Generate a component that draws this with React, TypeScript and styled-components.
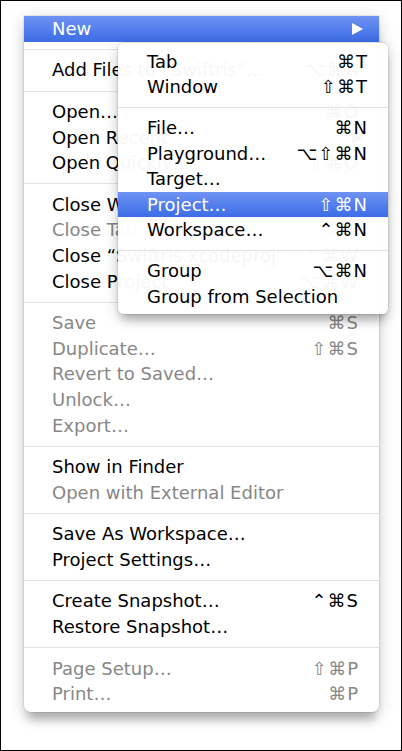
import styled, { createGlobalStyle } from "styled-components";

type Item =
  | { kind: "sep" }
  | {
      kind?: "item";
      label: string;
      keys?: string;
      disabled?: boolean;
      active?: boolean;
      submenu?: boolean;
    };

const MAIN: Item[] = [
  { label: "New", active: true, submenu: true },
  { kind: "sep" },
  { label: "Add Files to “Swiftris”…", keys: "⌥⌘A" },
  { kind: "sep" },
  { label: "Open…", keys: "⌘O" },
  { label: "Open Recent", submenu: true },
  { label: "Open Quickly…", keys: "⇧⌘O" },
  { kind: "sep" },
  { label: "Close Window", keys: "⌘W" },
  { label: "Close Tab", keys: "⌘W", disabled: true },
  { label: "Close “Swiftris.xcodeproj”", keys: "⌃⌘W" },
  { label: "Close Project", keys: "⌥⌘W" },
  { kind: "sep" },
  { label: "Save", keys: "⌘S", disabled: true },
  { label: "Duplicate…", keys: "⇧⌘S", disabled: true },
  { label: "Revert to Saved…", disabled: true },
  { label: "Unlock…", disabled: true },
  { label: "Export…", disabled: true },
  { kind: "sep" },
  { label: "Show in Finder" },
  { label: "Open with External Editor", disabled: true },
  { kind: "sep" },
  { label: "Save As Workspace…" },
  { label: "Project Settings…" },
  { kind: "sep" },
  { label: "Create Snapshot…", keys: "⌃⌘S" },
  { label: "Restore Snapshot…" },
  { kind: "sep" },
  { label: "Page Setup…", keys: "⇧⌘P", disabled: true },
  { label: "Print…", keys: "⌘P", disabled: true },
];

const SUB: Item[] = [
  { label: "Tab", keys: "⌘T" },
  { label: "Window", keys: "⇧⌘T" },
  { kind: "sep" },
  { label: "File…", keys: "⌘N" },
  { label: "Playground…", keys: "⌥⇧⌘N" },
  { label: "Target…" },
  { label: "Project…", keys: "⇧⌘N", active: true },
  { label: "Workspace…", keys: "⌃⌘N" },
  { kind: "sep" },
  { label: "Group", keys: "⌥⌘N" },
  { label: "Group from Selection" },
];

function MenuItems({ items, sub }: { items: Item[]; sub?: boolean }) {
  return (
    <>
      {items.map((it, i) =>
        it.kind === "sep" ? (
          <Separator key={i} />
        ) : (
          <Row
            key={i}
            $sub={sub}
            $active={it.active}
            $disabled={it.disabled}
          >
            <Label>{it.label}</Label>
            {it.submenu ? (
              <Arrow viewBox="0 0 11 12">
                <path d="M0 0 L11 6 L0 12 Z" fill="currentColor" />
              </Arrow>
            ) : (
              it.keys && <Keys>{it.keys}</Keys>
            )}
          </Row>
        )
      )}
    </>
  );
}

export default function App() {
  return (
    <>
      <GlobalStyle />
      <Frame>
        <MenuHolder>
          <MainMenu>
            <MenuItems items={MAIN} />
          </MainMenu>
          <SubMenu>
            <MenuItems items={SUB} sub />
          </SubMenu>
        </MenuHolder>
      </Frame>
    </>
  );
}

/* ---------------- styles ---------------- */

const GlobalStyle = createGlobalStyle`
  html, body {
    margin: 0;
    padding: 0;
    background: #fff;
  }
  body {
    font-family: "DejaVu Sans", "Liberation Sans", sans-serif;
  }
`;

const Frame = styled.div`
  width: 402px;
  height: 751px;
  box-sizing: border-box;
  border: 1px solid #000;
  background: #fff;
  padding: 15px 0 0 23px;
  overflow: hidden;
`;

const MenuHolder = styled.div`
  position: relative;
  width: 355px;
`;

const MainMenu = styled.div`
  width: 355px;
  background: #fff;
  padding-bottom: 5px;
  border-radius: 0 0 7px 7px;
  box-shadow: 0 0 0 1px rgba(0, 0, 0, 0.06), 0 4px 16px rgba(0, 0, 0, 0.2),
    0 12px 10px -4px rgba(0, 0, 0, 0.22);
`;

const SubMenu = styled.div`
  position: absolute;
  left: 94px;
  top: 27px;
  width: 270px;
  padding: 6px 0 4px;
  background: rgba(255, 255, 255, 0.965);
  border-radius: 6px;
  box-shadow: 0 0 0 1px rgba(0, 0, 0, 0.08), 0 4px 14px rgba(0, 0, 0, 0.22),
    0 10px 10px -4px rgba(0, 0, 0, 0.2);
`;

const Row = styled.div<{ $sub?: boolean; $active?: boolean; $disabled?: boolean }>`
  display: flex;
  align-items: center;
  justify-content: space-between;
  height: ${(p) => (p.$sub ? "25.4px" : "25.6px")};
  padding: ${(p) => (p.$sub ? "0 20px 0 29px" : "0 20px 0 28px")};
  font-size: 18px;
  line-height: 1;
  white-space: nowrap;
  color: ${(p) => (p.$active ? "#fff" : p.$disabled ? "#878787" : "#000")};
  background: ${(p) =>
    p.$active ? "linear-gradient(to bottom, #6e92f2, #3b6de6)" : "transparent"};
`;

const Label = styled.span`
  display: block;
`;

const Keys = styled.span`
  display: block;
  letter-spacing: 1px;
`;

const Arrow = styled.svg`
  width: 11px;
  height: 12px;
  flex: none;
  margin-right: -4px;
`;

const Separator = styled.div`
  height: 1px;
  margin: 7.5px 0;
  background: #e3e3e3;
`;
